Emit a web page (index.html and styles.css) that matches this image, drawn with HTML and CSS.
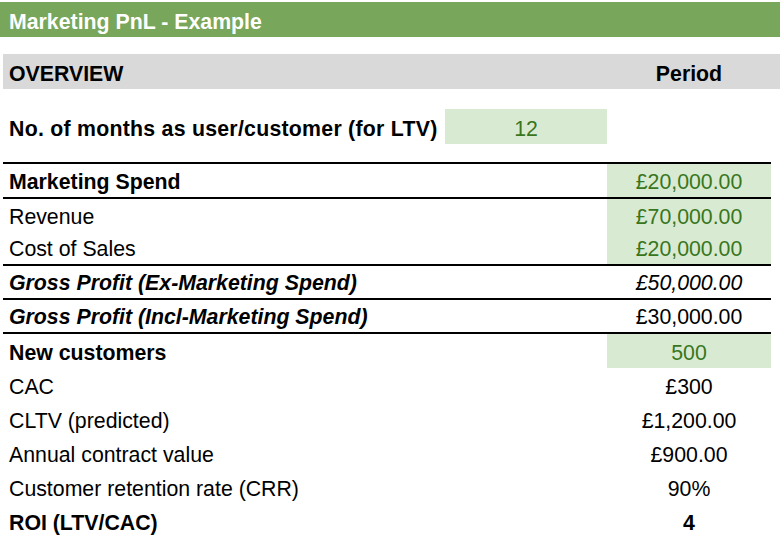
FILE: index.html
```html
<!DOCTYPE html>
<html lang="en">
<head>
<meta charset="utf-8">
<title>Marketing PnL - Example</title>
<link rel="stylesheet" href="styles.css">
</head>
<body>
<div class="sheet">
  <div class="title">Marketing PnL - Example</div>

  <div class="overview grid">
    <div class="cell label bold">OVERVIEW</div>
    <div class="cell"></div>
    <div class="cell val bold">Period</div>
  </div>

  <div class="months grid">
    <div class="cell label bold wide">No. of months as user/customer (for LTV)</div>
    <div class="cell val input">12</div>
  </div>

  <div class="table">
    <div class="row grid rule tall">
      <div class="cell label bold">Marketing Spend</div>
      <div class="cell"></div>
      <div class="cell val input">£20,000.00</div>
    </div>
    <div class="row grid short">
      <div class="cell label">Revenue</div>
      <div class="cell"></div>
      <div class="cell val input">£70,000.00</div>
    </div>
    <div class="row grid rule">
      <div class="cell label">Cost of Sales</div>
      <div class="cell"></div>
      <div class="cell val input">£20,000.00</div>
    </div>
    <div class="row grid rule">
      <div class="cell label bold italic">Gross Profit (Ex-Marketing Spend)</div>
      <div class="cell"></div>
      <div class="cell val italic">£50,000.00</div>
    </div>
    <div class="row grid rule">
      <div class="cell label bold italic">Gross Profit (Incl-Marketing Spend)</div>
      <div class="cell"></div>
      <div class="cell val">£30,000.00</div>
    </div>
    <div class="row grid">
      <div class="cell label bold">New customers</div>
      <div class="cell"></div>
      <div class="cell val input">500</div>
    </div>
    <div class="row grid">
      <div class="cell label">CAC</div>
      <div class="cell"></div>
      <div class="cell val">£300</div>
    </div>
    <div class="row grid">
      <div class="cell label">CLTV (predicted)</div>
      <div class="cell"></div>
      <div class="cell val">£1,200.00</div>
    </div>
    <div class="row grid">
      <div class="cell label">Annual contract value</div>
      <div class="cell"></div>
      <div class="cell val">£900.00</div>
    </div>
    <div class="row grid">
      <div class="cell label">Customer retention rate (CRR)</div>
      <div class="cell"></div>
      <div class="cell val">90%</div>
    </div>
    <div class="row grid">
      <div class="cell label bold">ROI (LTV/CAC)</div>
      <div class="cell"></div>
      <div class="cell val bold">4</div>
    </div>
  </div>
</div>
</body>
</html>
```

FILE: styles.css
```css
html, body {
  margin: 0;
  padding: 0;
  background: #ffffff;
}

.sheet {
  width: 780px;
  font-family: "Liberation Sans", Arial, Helvetica, sans-serif;
  font-size: 21.3px;
  line-height: 24px;
  color: #000000;
}

.title {
  box-sizing: border-box;
  margin-top: 2px;
  height: 35px;
  background: #78a65a;
  color: #ffffff;
  font-weight: bold;
  display: flex;
  align-items: flex-end;
  padding: 0 0 3px 9px;
}

.grid {
  display: grid;
  grid-template-columns: 442px 162px 164px 1fr;
}

.overview {
  margin: 17px 0 0 3px;
  height: 35px;
  background: #d9d9d9;
}

.months {
  margin: 20px 0 0 3px;
  height: 35px;
}

.table {
  margin: 18px 0 0 3px;
  width: 768px;
  border-top: 2px solid #000000;
}

.row {
  box-sizing: border-box;
  height: 34px;
  grid-template-columns: 442px 162px 164px;
}

.row.tall { height: 35px; }
.row.short { height: 33px; }

.rule {
  border-bottom: 2px solid #000000;
}

.cell {
  display: flex;
  align-items: flex-end;
  padding-bottom: 3px;
  white-space: nowrap;
}

.label {
  padding-left: 6px;
}

.wide {
  letter-spacing: 0.25px;
}

.val {
  justify-content: center;
}

.input {
  background: #d9ead3;
  color: #38761d;
}

.bold { font-weight: bold; }
.italic { font-style: italic; }
```
